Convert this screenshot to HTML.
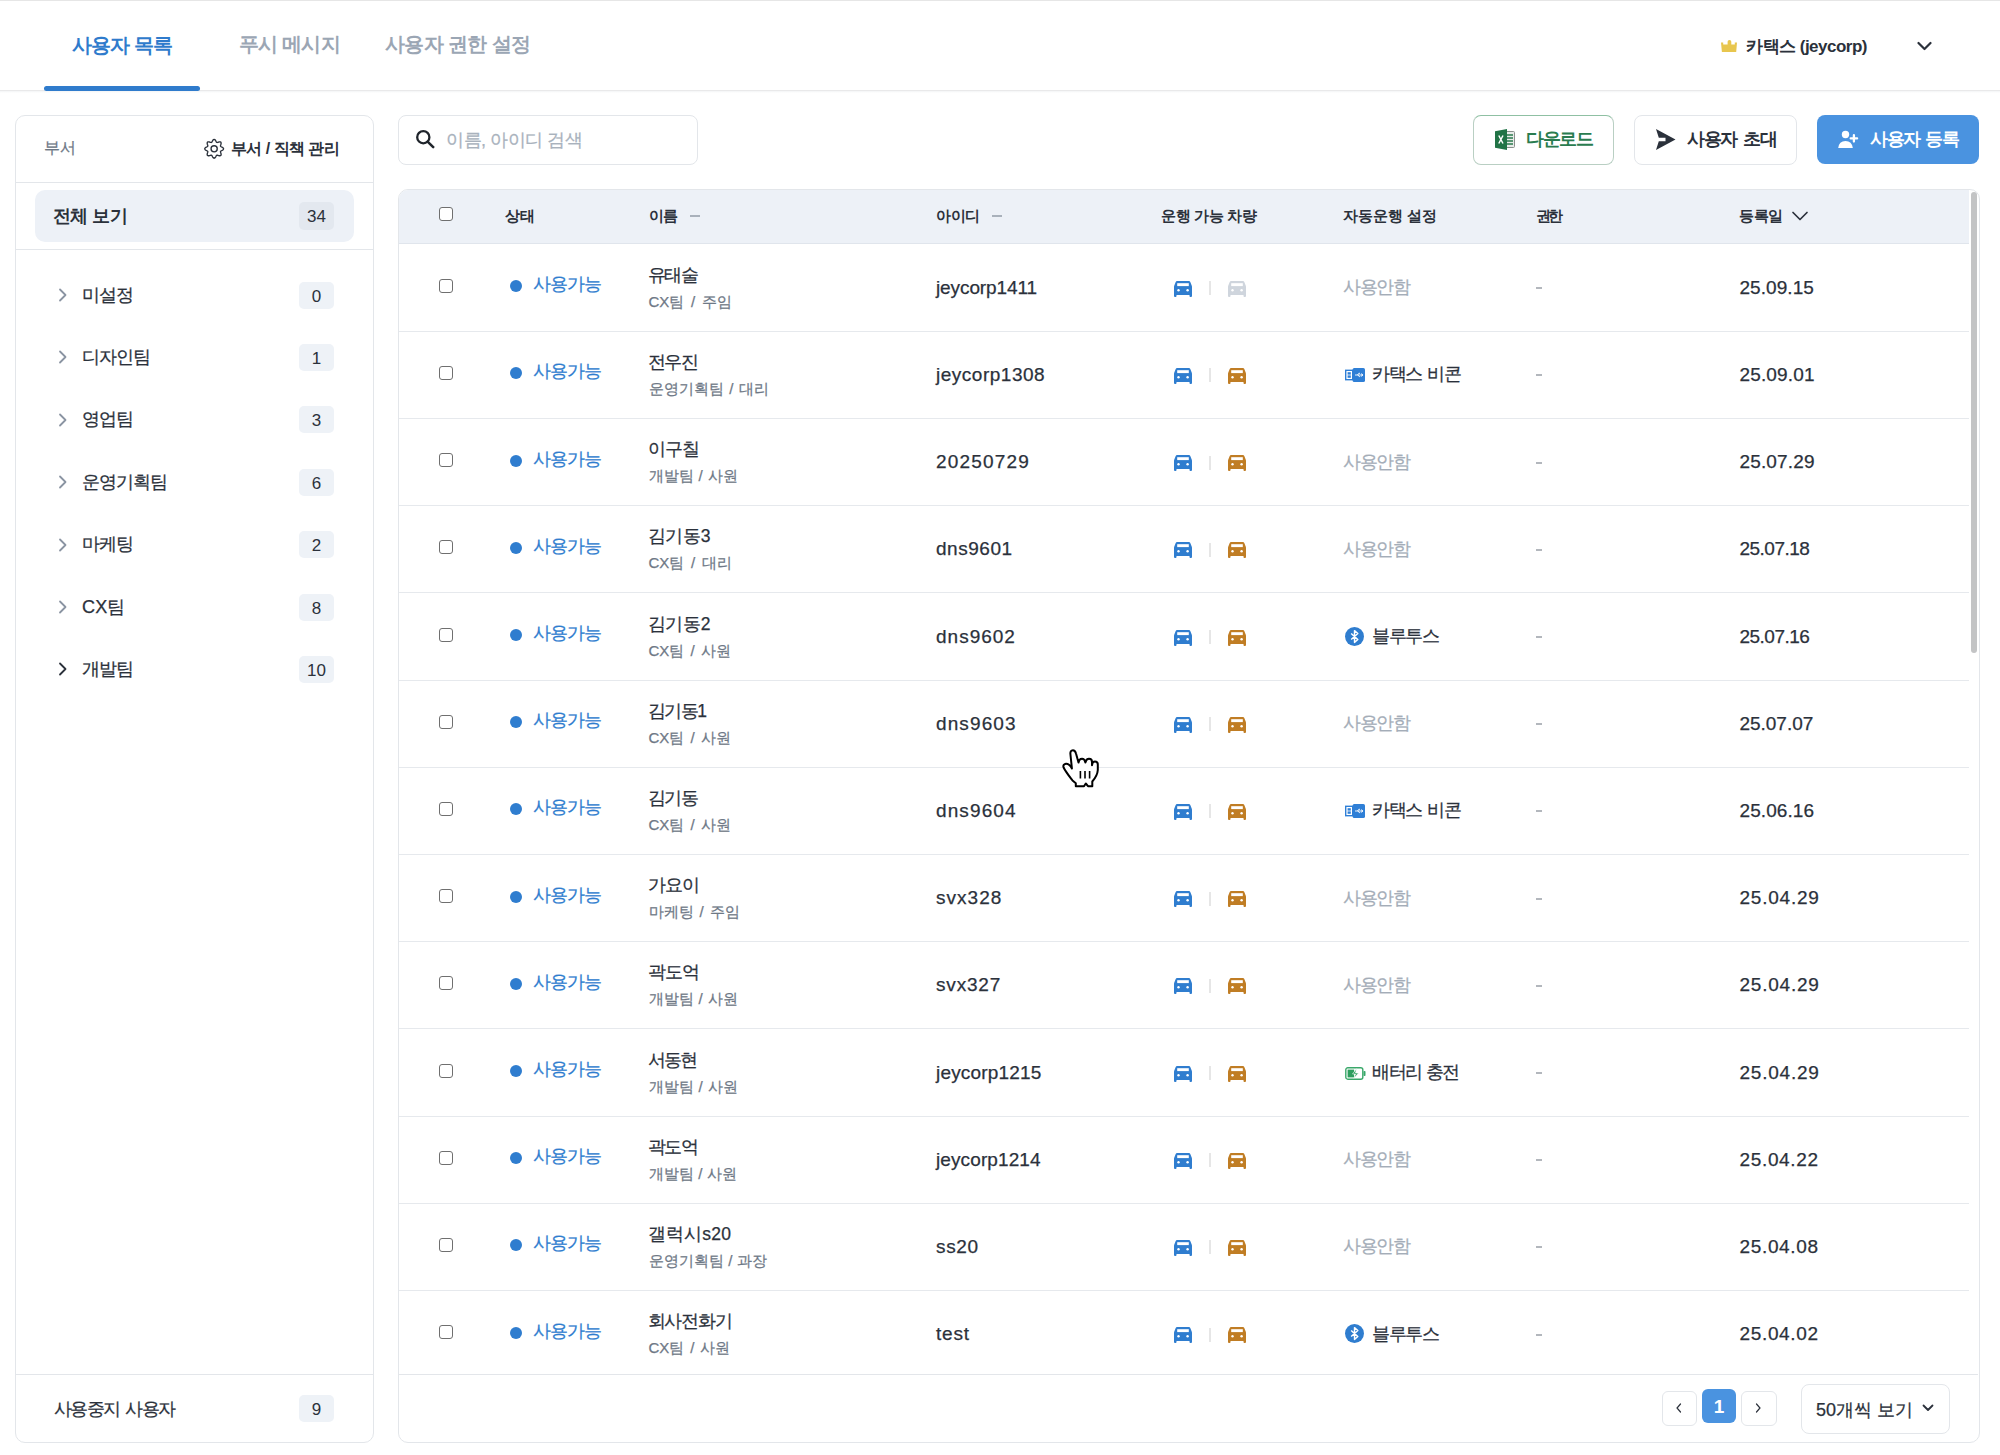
<!DOCTYPE html>
<html><head><meta charset="utf-8"><style>
html,body{margin:0;padding:0;background:#fff;}
body{width:2000px;height:1455px;overflow:hidden;position:relative;font-family:"Liberation Sans", sans-serif;}
.ab{position:absolute;}
.t{white-space:nowrap;line-height:1;}
.r{-webkit-text-stroke:0.25px currentColor;}
.cb{position:absolute;width:12px;height:12px;border:1.3px solid #6f6f6f;border-radius:3px;background:#fff;}
.badge{position:absolute;width:35px;height:27px;border-radius:5px;background:#eef2f7;font-size:17px;color:#2b313b;text-align:center;line-height:29px;}
</style></head><body>

<div class="ab" style="left:0;top:0;width:2000px;height:1px;background:#e6e6e6"></div>
<div class="ab" style="left:0;top:90px;width:2000px;height:2px;background:#e9e9ea"></div>
<div class="ab" style="left:0;top:91px;width:2000px;height:2px;background:linear-gradient(#f3f4f6,#fff)"></div>
<div class="ab t" style="left:72px;top:35px;font-size:20px;color:#2f7bcc;font-weight:700;letter-spacing:-1.0px;">사용자 목록</div>
<div class="ab t" style="left:239px;top:34px;font-size:20px;color:#9ba6b4;font-weight:700;letter-spacing:-0.8px;">푸시 메시지</div>
<div class="ab t" style="left:385px;top:34px;font-size:20px;color:#9ba6b4;font-weight:700;letter-spacing:-0.62px;">사용자 권한 설정</div>
<div class="ab" style="left:44px;top:86px;width:156px;height:5px;border-radius:3px;background:#2f7bcc"></div>
<svg class="ab" style="left:1720.7px;top:39.5px" width="16" height="12" viewBox="0 0 16 12"><path fill="#e8c64e" d="M0 2.6H2.2V4.4H6.6V1.7Q6.6 0 8.45 0Q10.3 0 10.3 1.7V4.4H13.8V2.6H16L15.2 12H0.9Z"/></svg>
<div class="ab t" style="left:1746px;top:38px;font-size:17px;color:#2b313b;font-weight:700;letter-spacing:-0.5px;">카택스 (jeycorp)</div>
<svg class="ab" style="left:1917px;top:41px" width="15" height="10" viewBox="0 0 15 10"><path d="M1.5 2L7.5 8L13.5 2" fill="none" stroke="#2b313b" stroke-width="2.2" stroke-linecap="round" stroke-linejoin="round"/></svg>
<div class="ab" style="left:15px;top:115px;width:357px;height:1326px;border:1px solid #e3e6ea;border-radius:10px;"></div>
<div class="ab t r" style="left:44px;top:140px;font-size:16px;color:#6e7886;font-weight:400;letter-spacing:0px;">부서</div>
<svg class="ab" style="left:202px;top:137px" width="24" height="24" viewBox="0 0 24 24"><path fill="none" stroke="#2b313b" stroke-width="1.35" stroke-linejoin="round" d="M21.55 11.80 L21.36 11.20 L20.85 10.65 L20.14 10.21 L19.42 9.85 L18.84 9.53 L18.52 9.16 L18.49 8.67 L18.67 8.04 L18.93 7.27 L19.11 6.46 L19.09 5.71 L18.80 5.15 L18.24 4.86 L17.49 4.84 L16.68 5.02 L15.91 5.28 L15.28 5.46 L14.79 5.43 L14.42 5.11 L14.10 4.53 L13.74 3.81 L13.30 3.10 L12.75 2.59 L12.15 2.40 L11.55 2.59 L11.00 3.10 L10.56 3.81 L10.20 4.53 L9.88 5.11 L9.51 5.43 L9.02 5.46 L8.39 5.28 L7.62 5.02 L6.81 4.84 L6.06 4.86 L5.50 5.15 L5.21 5.71 L5.19 6.46 L5.37 7.27 L5.63 8.04 L5.81 8.67 L5.78 9.16 L5.46 9.53 L4.88 9.85 L4.16 10.21 L3.45 10.65 L2.94 11.20 L2.75 11.80 L2.94 12.40 L3.45 12.95 L4.16 13.39 L4.88 13.75 L5.46 14.07 L5.78 14.44 L5.81 14.93 L5.63 15.56 L5.37 16.33 L5.19 17.14 L5.21 17.89 L5.50 18.45 L6.06 18.74 L6.81 18.76 L7.62 18.58 L8.39 18.32 L9.02 18.14 L9.51 18.17 L9.88 18.49 L10.20 19.07 L10.56 19.79 L11.00 20.50 L11.55 21.01 L12.15 21.20 L12.75 21.01 L13.30 20.50 L13.74 19.79 L14.10 19.07 L14.42 18.49 L14.79 18.17 L15.28 18.14 L15.91 18.32 L16.68 18.58 L17.49 18.76 L18.24 18.74 L18.80 18.45 L19.09 17.89 L19.11 17.14 L18.93 16.33 L18.67 15.56 L18.49 14.93 L18.52 14.44 L18.84 14.07 L19.42 13.75 L20.14 13.39 L20.85 12.95 L21.36 12.40 L21.55 11.80Z"/><circle cx="12.15" cy="11.8" r="3.1" fill="none" stroke="#2b313b" stroke-width="1.35"/></svg>
<div class="ab t" style="left:231px;top:140.5px;font-size:16px;color:#2b313b;font-weight:700;letter-spacing:-0.55px;">부서 / 직책 관리</div>
<div class="ab" style="left:16px;top:182px;width:357px;height:1px;background:#e3e6ea"></div>
<div class="ab" style="left:35px;top:190px;width:319px;height:52px;border-radius:10px;background:#edf1f7"></div>
<div class="ab t" style="left:53px;top:206.5px;font-size:18px;color:#2b313b;font-weight:700;letter-spacing:-0.6px;">전체 보기</div>
<div class="badge" style="left:299px;top:202px;height:28px;line-height:30px;background:#e3e8ef">34</div>
<div class="ab" style="left:16px;top:249px;width:357px;height:1px;background:#e3e6ea"></div>
<svg class="ab" style="left:58px;top:288.0px" width="10" height="14" viewBox="0 0 10 14"><path d="M2 1.5L7.5 7L2 12.5" fill="none" stroke="#8a94a2" stroke-width="1.8" stroke-linecap="round" stroke-linejoin="round"/></svg>
<div class="ab t r" style="left:82px;top:285.5px;font-size:18px;color:#2b313b;font-weight:400;letter-spacing:-1.0px;">미설정</div>
<div class="badge" style="left:299px;top:281.5px">0</div>
<svg class="ab" style="left:58px;top:350.4px" width="10" height="14" viewBox="0 0 10 14"><path d="M2 1.5L7.5 7L2 12.5" fill="none" stroke="#8a94a2" stroke-width="1.8" stroke-linecap="round" stroke-linejoin="round"/></svg>
<div class="ab t r" style="left:82px;top:347.9px;font-size:18px;color:#2b313b;font-weight:400;letter-spacing:-1.0px;">디자인팀</div>
<div class="badge" style="left:299px;top:343.9px">1</div>
<svg class="ab" style="left:58px;top:412.8px" width="10" height="14" viewBox="0 0 10 14"><path d="M2 1.5L7.5 7L2 12.5" fill="none" stroke="#8a94a2" stroke-width="1.8" stroke-linecap="round" stroke-linejoin="round"/></svg>
<div class="ab t r" style="left:82px;top:410.3px;font-size:18px;color:#2b313b;font-weight:400;letter-spacing:-1.0px;">영업팀</div>
<div class="badge" style="left:299px;top:406.3px">3</div>
<svg class="ab" style="left:58px;top:475.2px" width="10" height="14" viewBox="0 0 10 14"><path d="M2 1.5L7.5 7L2 12.5" fill="none" stroke="#8a94a2" stroke-width="1.8" stroke-linecap="round" stroke-linejoin="round"/></svg>
<div class="ab t r" style="left:82px;top:472.7px;font-size:18px;color:#2b313b;font-weight:400;letter-spacing:-1.0px;">운영기획팀</div>
<div class="badge" style="left:299px;top:468.7px">6</div>
<svg class="ab" style="left:58px;top:537.6px" width="10" height="14" viewBox="0 0 10 14"><path d="M2 1.5L7.5 7L2 12.5" fill="none" stroke="#8a94a2" stroke-width="1.8" stroke-linecap="round" stroke-linejoin="round"/></svg>
<div class="ab t r" style="left:82px;top:535.1px;font-size:18px;color:#2b313b;font-weight:400;letter-spacing:-1.0px;">마케팅</div>
<div class="badge" style="left:299px;top:531.1px">2</div>
<svg class="ab" style="left:58px;top:600.0px" width="10" height="14" viewBox="0 0 10 14"><path d="M2 1.5L7.5 7L2 12.5" fill="none" stroke="#8a94a2" stroke-width="1.8" stroke-linecap="round" stroke-linejoin="round"/></svg>
<div class="ab t r" style="left:82px;top:597.5px;font-size:18px;color:#2b313b;font-weight:400;letter-spacing:0.2px;">CX팀</div>
<div class="badge" style="left:299px;top:593.5px">8</div>
<svg class="ab" style="left:58px;top:662.4px" width="10" height="14" viewBox="0 0 10 14"><path d="M2 1.5L7.5 7L2 12.5" fill="none" stroke="#2b313b" stroke-width="1.8" stroke-linecap="round" stroke-linejoin="round"/></svg>
<div class="ab t r" style="left:82px;top:659.9px;font-size:18px;color:#2b313b;font-weight:400;letter-spacing:-1.0px;">개발팀</div>
<div class="badge" style="left:299px;top:655.9px">10</div>
<div class="ab" style="left:16px;top:1374px;width:357px;height:1px;background:#e3e6ea"></div>
<div class="ab t r" style="left:53.5px;top:1400px;font-size:18px;color:#2b313b;font-weight:400;letter-spacing:-1.5px;word-spacing:2.3px;">사용중지 사용자</div>
<div class="badge" style="left:299px;top:1395px;height:27px">9</div>
<div class="ab" style="left:398px;top:115px;width:298px;height:48px;border:1px solid #e3e6ea;border-radius:8px;"></div>
<svg class="ab" style="left:415px;top:129px" width="20" height="20" viewBox="0 0 20 20"><circle cx="8.3" cy="8.2" r="6.1" fill="none" stroke="#1f242b" stroke-width="2.3"/><path d="M12.6 12.6L18.2 18.2" stroke="#1f242b" stroke-width="2.5" stroke-linecap="round"/></svg>
<div class="ab t r" style="left:446px;top:130.5px;font-size:18px;color:#a9b2bd;font-weight:400;letter-spacing:-0.47px;">이름, 아이디 검색</div>
<div class="ab" style="left:1473px;top:115px;width:139px;height:48px;border:1px solid #b9cfc3;border-top-color:#8fc0a3;border-radius:8px;"></div>
<svg class="ab" style="left:1495px;top:129px" width="20" height="21" viewBox="0 0 20 21"><rect x="11" y="2.5" width="8.5" height="16" rx="1" fill="#e8ece9" stroke="#8a8f8c" stroke-width="1"/><path d="M12 6h6M12 9h6M12 12h6M12 15h6" stroke="#2a7a4d" stroke-width="1.4"/><path fill="#217346" d="M0 2.2L12 0V21L0 18.8Z"/><path d="M3.8 6.5L8 14.5M8 6.5L3.8 14.5" stroke="#fff" stroke-width="1.5"/></svg>
<div class="ab t" style="left:1526px;top:129.5px;font-size:18px;color:#2a7c4f;font-weight:700;letter-spacing:-1.4px;">다운로드</div>
<div class="ab" style="left:1634px;top:115px;width:161px;height:48px;border:1px solid #e3e6ea;border-radius:8px;"></div>
<svg class="ab" style="left:1656px;top:129px" width="20" height="21" viewBox="0 0 20 21"><path fill="#2b313b" d="M0 0L19.5 10.5L0 21L2.8 12.2H9.5V8.8H2.8Z"/></svg>
<div class="ab t" style="left:1687px;top:129.5px;font-size:18px;color:#2b313b;font-weight:700;letter-spacing:-1.3px;word-spacing:2px;">사용자 초대</div>
<div class="ab" style="left:1817px;top:115px;width:162px;height:49px;border-radius:8px;background:#4a93e0"></div>
<svg class="ab" style="left:1837px;top:129px" width="24" height="20" viewBox="0 0 24 20"><circle cx="8.5" cy="5.5" r="3.7" fill="#fff"/><path fill="#fff" d="M1.2 19Q2 12 8.5 12Q15 12 15.8 19Z"/><path d="M16.9 6.2V12.6M13.7 9.4H20.1" stroke="#fff" stroke-width="2.3" stroke-linecap="round"/></svg>
<div class="ab t" style="left:1870px;top:129.5px;font-size:18px;color:#ffffff;font-weight:700;letter-spacing:-1.4px;word-spacing:2px;">사용자 등록</div>
<div class="ab" style="left:398px;top:189px;width:1580px;height:1252px;border:1px solid #e3e6ea;border-radius:10px;overflow:hidden">
<div class="ab" style="left:0;top:0;width:1570px;height:53px;background:#edf1f7;border-bottom:1px solid #e0e5ec"></div>
</div>
<div class="cb" style="left:439px;top:207px"></div>
<div class="ab t" style="left:505px;top:208.3px;font-size:15px;color:#2b313b;font-weight:700;letter-spacing:-0.5px;">상태</div>
<div class="ab t" style="left:648.5px;top:208.3px;font-size:15px;color:#2b313b;font-weight:700;letter-spacing:-0.5px;">이름</div>
<div class="ab" style="left:690px;top:215px;width:10px;height:2px;background:#a9b1bb"></div>
<div class="ab t" style="left:936px;top:208.3px;font-size:15px;color:#2b313b;font-weight:700;letter-spacing:-0.5px;">아이디</div>
<div class="ab" style="left:992px;top:215px;width:10px;height:2px;background:#a9b1bb"></div>
<div class="ab t" style="left:1161px;top:208.3px;font-size:15px;color:#2b313b;font-weight:700;letter-spacing:-0.4px;">운행 가능 차량</div>
<div class="ab t" style="left:1343px;top:208.3px;font-size:15px;color:#2b313b;font-weight:700;letter-spacing:-0.1px;">자동운행 설정</div>
<div class="ab t" style="left:1535.5px;top:208.3px;font-size:15px;color:#2b313b;font-weight:700;letter-spacing:-2.8px;">권한</div>
<div class="ab t" style="left:1739px;top:208.3px;font-size:15px;color:#2b313b;font-weight:700;letter-spacing:-0.5px;">등록일</div>
<svg class="ab" style="left:1791px;top:210px" width="18" height="12" viewBox="0 0 18 12"><path d="M2 2.5L9 9.5L16 2.5" fill="none" stroke="#2b313b" stroke-width="1.7" stroke-linecap="round" stroke-linejoin="round"/></svg>
<div class="ab" style="left:399px;top:331px;width:1570px;height:1px;background:#e6e9ed"></div>
<div class="cb" style="left:439px;top:278.7px"></div>
<div class="ab" style="left:510px;top:280.2px;width:12px;height:12px;border-radius:50%;background:#2f7dcf"></div>
<div class="ab t r" style="left:533px;top:275.2px;font-size:18px;color:#2f7dcf;font-weight:400;letter-spacing:-1.1px;">사용가능</div>
<div class="ab t r" style="left:647.5px;top:266.7px;font-size:17.5px;color:#2b313b;font-weight:400;letter-spacing:-1.5px;">유태술</div>
<div class="ab t r" style="left:648.5px;top:293.8px;font-size:15px;color:#6e7886;font-weight:400;letter-spacing:0px;word-spacing:2.6px;">CX팀 / 주임</div>
<div class="ab t r" style="left:936px;top:277.7px;font-size:19px;color:#2b313b;font-weight:400;letter-spacing:-0.1px;">jeycorp1411</div>
<svg class="ab" style="left:1173.5px;top:280.7px" width="18" height="16" viewBox="0 0 18 16"><path fill="#2f7dcf" d="M1.7 0.9Q2.1 0 3.1 0H14.9Q15.9 0 16.3 0.9L17.7 4.6Q18 5.3 18 6V15Q18 16 17 16H16.4Q15.5 16 15.5 15V13.9H2.5V15Q2.5 16 1.6 16H1Q0 16 0 15V6Q0 5.3 0.3 4.6Z"/><rect x="3.2" y="2.2" width="11.6" height="2.9" fill="#fff"/><circle cx="4.5" cy="9.3" r="1.2" fill="#fff"/><circle cx="13.6" cy="9.3" r="1.2" fill="#fff"/></svg>
<div class="ab" style="left:1209px;top:281.2px;width:2px;height:14px;background:#e6e6e6"></div>
<svg class="ab" style="left:1228px;top:280.7px" width="18" height="16" viewBox="0 0 18 16"><path fill="#cfd5dd" d="M1.7 0.9Q2.1 0 3.1 0H14.9Q15.9 0 16.3 0.9L17.7 4.6Q18 5.3 18 6V15Q18 16 17 16H16.4Q15.5 16 15.5 15V13.9H2.5V15Q2.5 16 1.6 16H1Q0 16 0 15V6Q0 5.3 0.3 4.6Z"/><rect x="3.2" y="2.2" width="11.6" height="2.9" fill="#fff"/><circle cx="4.5" cy="9.3" r="1.2" fill="#fff"/><circle cx="13.6" cy="9.3" r="1.2" fill="#fff"/></svg>
<div class="ab t r" style="left:1343px;top:278.2px;font-size:18px;color:#a4adb8;font-weight:400;letter-spacing:-1.465px;">사용안함</div>
<div class="ab" style="left:1536px;top:287px;width:6px;height:2px;background:#b3b7bd"></div>
<div class="ab t r" style="left:1739.5px;top:277.7px;font-size:19px;color:#2b313b;font-weight:400;letter-spacing:0.058px;">25.09.15</div>
<div class="ab" style="left:399px;top:418px;width:1570px;height:1px;background:#e6e9ed"></div>
<div class="cb" style="left:439px;top:365.9px"></div>
<div class="ab" style="left:510px;top:367.4px;width:12px;height:12px;border-radius:50%;background:#2f7dcf"></div>
<div class="ab t r" style="left:533px;top:362.40000000000003px;font-size:18px;color:#2f7dcf;font-weight:400;letter-spacing:-1.1px;">사용가능</div>
<div class="ab t r" style="left:647.5px;top:353.90000000000003px;font-size:17.5px;color:#2b313b;font-weight:400;letter-spacing:-1.5px;">전우진</div>
<div class="ab t r" style="left:648.5px;top:381.00000000000006px;font-size:15px;color:#6e7886;font-weight:400;letter-spacing:0px;word-spacing:1.5px;">운영기획팀 / 대리</div>
<div class="ab t r" style="left:936px;top:364.90000000000003px;font-size:19px;color:#2b313b;font-weight:400;letter-spacing:0.51px;">jeycorp1308</div>
<svg class="ab" style="left:1173.5px;top:367.90000000000003px" width="18" height="16" viewBox="0 0 18 16"><path fill="#2f7dcf" d="M1.7 0.9Q2.1 0 3.1 0H14.9Q15.9 0 16.3 0.9L17.7 4.6Q18 5.3 18 6V15Q18 16 17 16H16.4Q15.5 16 15.5 15V13.9H2.5V15Q2.5 16 1.6 16H1Q0 16 0 15V6Q0 5.3 0.3 4.6Z"/><rect x="3.2" y="2.2" width="11.6" height="2.9" fill="#fff"/><circle cx="4.5" cy="9.3" r="1.2" fill="#fff"/><circle cx="13.6" cy="9.3" r="1.2" fill="#fff"/></svg>
<div class="ab" style="left:1209px;top:368.4px;width:2px;height:14px;background:#e6e6e6"></div>
<svg class="ab" style="left:1228px;top:367.90000000000003px" width="18" height="16" viewBox="0 0 18 16"><path fill="#c07d24" d="M1.7 0.9Q2.1 0 3.1 0H14.9Q15.9 0 16.3 0.9L17.7 4.6Q18 5.3 18 6V15Q18 16 17 16H16.4Q15.5 16 15.5 15V13.9H2.5V15Q2.5 16 1.6 16H1Q0 16 0 15V6Q0 5.3 0.3 4.6Z"/><rect x="3.2" y="2.2" width="11.6" height="2.9" fill="#fff"/><circle cx="4.5" cy="9.3" r="1.2" fill="#fff"/><circle cx="13.6" cy="9.3" r="1.2" fill="#fff"/></svg>
<svg class="ab" style="left:1345px;top:368.2px" width="20" height="14" viewBox="0 0 20 14"><rect x="0" y="1.6" width="9" height="10.8" fill="#2f7fd6"/><rect x="1.4" y="3" width="5.6" height="8" fill="#fff"/><rect x="2.6" y="4.2" width="3.2" height="2.4" fill="#2f7fd6"/><rect x="2.6" y="7.4" width="3.2" height="2.4" fill="#2f7fd6"/><rect x="7.6" y="0" width="12.4" height="14" rx="1.6" fill="#2f7fd6"/><path d="M10 7H18M16 5.6L18 7L16 8.4M12.5 7L13.8 5.3H15M13 7L14.2 8.6H15.2" stroke="#fff" stroke-width="0.9" fill="none"/></svg>
<div class="ab t r" style="left:1372px;top:365.40000000000003px;font-size:18px;color:#2b313b;font-weight:400;letter-spacing:-1.3px;word-spacing:1.3px;">카택스 비콘</div>
<div class="ab" style="left:1536px;top:374px;width:6px;height:2px;background:#b3b7bd"></div>
<div class="ab t r" style="left:1739.5px;top:364.90000000000003px;font-size:19px;color:#2b313b;font-weight:400;letter-spacing:0.143px;">25.09.01</div>
<div class="ab" style="left:399px;top:505px;width:1570px;height:1px;background:#e6e9ed"></div>
<div class="cb" style="left:439px;top:453.1px"></div>
<div class="ab" style="left:510px;top:454.6px;width:12px;height:12px;border-radius:50%;background:#2f7dcf"></div>
<div class="ab t r" style="left:533px;top:449.6px;font-size:18px;color:#2f7dcf;font-weight:400;letter-spacing:-1.1px;">사용가능</div>
<div class="ab t r" style="left:647.5px;top:441.1px;font-size:17.5px;color:#2b313b;font-weight:400;letter-spacing:-1.0px;">이구칠</div>
<div class="ab t r" style="left:648.5px;top:468.20000000000005px;font-size:15px;color:#6e7886;font-weight:400;letter-spacing:0px;word-spacing:0.8px;">개발팀 / 사원</div>
<div class="ab t r" style="left:936px;top:452.1px;font-size:19px;color:#2b313b;font-weight:400;letter-spacing:1.175px;">20250729</div>
<svg class="ab" style="left:1173.5px;top:455.1px" width="18" height="16" viewBox="0 0 18 16"><path fill="#2f7dcf" d="M1.7 0.9Q2.1 0 3.1 0H14.9Q15.9 0 16.3 0.9L17.7 4.6Q18 5.3 18 6V15Q18 16 17 16H16.4Q15.5 16 15.5 15V13.9H2.5V15Q2.5 16 1.6 16H1Q0 16 0 15V6Q0 5.3 0.3 4.6Z"/><rect x="3.2" y="2.2" width="11.6" height="2.9" fill="#fff"/><circle cx="4.5" cy="9.3" r="1.2" fill="#fff"/><circle cx="13.6" cy="9.3" r="1.2" fill="#fff"/></svg>
<div class="ab" style="left:1209px;top:455.6px;width:2px;height:14px;background:#e6e6e6"></div>
<svg class="ab" style="left:1228px;top:455.1px" width="18" height="16" viewBox="0 0 18 16"><path fill="#c07d24" d="M1.7 0.9Q2.1 0 3.1 0H14.9Q15.9 0 16.3 0.9L17.7 4.6Q18 5.3 18 6V15Q18 16 17 16H16.4Q15.5 16 15.5 15V13.9H2.5V15Q2.5 16 1.6 16H1Q0 16 0 15V6Q0 5.3 0.3 4.6Z"/><rect x="3.2" y="2.2" width="11.6" height="2.9" fill="#fff"/><circle cx="4.5" cy="9.3" r="1.2" fill="#fff"/><circle cx="13.6" cy="9.3" r="1.2" fill="#fff"/></svg>
<div class="ab t r" style="left:1343px;top:452.6px;font-size:18px;color:#a4adb8;font-weight:400;letter-spacing:-1.465px;">사용안함</div>
<div class="ab" style="left:1536px;top:462px;width:6px;height:2px;background:#b3b7bd"></div>
<div class="ab t r" style="left:1739.5px;top:452.1px;font-size:19px;color:#2b313b;font-weight:400;letter-spacing:0.143px;">25.07.29</div>
<div class="ab" style="left:399px;top:592px;width:1570px;height:1px;background:#e6e9ed"></div>
<div class="cb" style="left:439px;top:540.3px"></div>
<div class="ab" style="left:510px;top:541.8px;width:12px;height:12px;border-radius:50%;background:#2f7dcf"></div>
<div class="ab t r" style="left:533px;top:536.8000000000001px;font-size:18px;color:#2f7dcf;font-weight:400;letter-spacing:-1.1px;">사용가능</div>
<div class="ab t r" style="left:647.5px;top:528.3000000000001px;font-size:17.5px;color:#2b313b;font-weight:400;letter-spacing:-0.265px;">김기동3</div>
<div class="ab t r" style="left:648.5px;top:555.4000000000001px;font-size:15px;color:#6e7886;font-weight:400;letter-spacing:0px;word-spacing:2.6px;">CX팀 / 대리</div>
<div class="ab t r" style="left:936px;top:539.3000000000001px;font-size:19px;color:#2b313b;font-weight:400;letter-spacing:0.532px;">dns9601</div>
<svg class="ab" style="left:1173.5px;top:542.3000000000001px" width="18" height="16" viewBox="0 0 18 16"><path fill="#2f7dcf" d="M1.7 0.9Q2.1 0 3.1 0H14.9Q15.9 0 16.3 0.9L17.7 4.6Q18 5.3 18 6V15Q18 16 17 16H16.4Q15.5 16 15.5 15V13.9H2.5V15Q2.5 16 1.6 16H1Q0 16 0 15V6Q0 5.3 0.3 4.6Z"/><rect x="3.2" y="2.2" width="11.6" height="2.9" fill="#fff"/><circle cx="4.5" cy="9.3" r="1.2" fill="#fff"/><circle cx="13.6" cy="9.3" r="1.2" fill="#fff"/></svg>
<div class="ab" style="left:1209px;top:542.8px;width:2px;height:14px;background:#e6e6e6"></div>
<svg class="ab" style="left:1228px;top:542.3000000000001px" width="18" height="16" viewBox="0 0 18 16"><path fill="#c07d24" d="M1.7 0.9Q2.1 0 3.1 0H14.9Q15.9 0 16.3 0.9L17.7 4.6Q18 5.3 18 6V15Q18 16 17 16H16.4Q15.5 16 15.5 15V13.9H2.5V15Q2.5 16 1.6 16H1Q0 16 0 15V6Q0 5.3 0.3 4.6Z"/><rect x="3.2" y="2.2" width="11.6" height="2.9" fill="#fff"/><circle cx="4.5" cy="9.3" r="1.2" fill="#fff"/><circle cx="13.6" cy="9.3" r="1.2" fill="#fff"/></svg>
<div class="ab t r" style="left:1343px;top:539.8000000000001px;font-size:18px;color:#a4adb8;font-weight:400;letter-spacing:-1.465px;">사용안함</div>
<div class="ab" style="left:1536px;top:549px;width:6px;height:2px;background:#b3b7bd"></div>
<div class="ab t r" style="left:1739.5px;top:539.3000000000001px;font-size:19px;color:#2b313b;font-weight:400;letter-spacing:-0.517px;">25.07.18</div>
<div class="ab" style="left:399px;top:680px;width:1570px;height:1px;background:#e6e9ed"></div>
<div class="cb" style="left:439px;top:627.5px"></div>
<div class="ab" style="left:510px;top:629.0px;width:12px;height:12px;border-radius:50%;background:#2f7dcf"></div>
<div class="ab t r" style="left:533px;top:624.0px;font-size:18px;color:#2f7dcf;font-weight:400;letter-spacing:-1.1px;">사용가능</div>
<div class="ab t r" style="left:647.5px;top:615.5px;font-size:17.5px;color:#2b313b;font-weight:400;letter-spacing:-0.265px;">김기동2</div>
<div class="ab t r" style="left:648.5px;top:642.6px;font-size:15px;color:#6e7886;font-weight:400;letter-spacing:0px;word-spacing:2.1px;">CX팀 / 사원</div>
<div class="ab t r" style="left:936px;top:626.5px;font-size:19px;color:#2b313b;font-weight:400;letter-spacing:1.0px;">dns9602</div>
<svg class="ab" style="left:1173.5px;top:629.5px" width="18" height="16" viewBox="0 0 18 16"><path fill="#2f7dcf" d="M1.7 0.9Q2.1 0 3.1 0H14.9Q15.9 0 16.3 0.9L17.7 4.6Q18 5.3 18 6V15Q18 16 17 16H16.4Q15.5 16 15.5 15V13.9H2.5V15Q2.5 16 1.6 16H1Q0 16 0 15V6Q0 5.3 0.3 4.6Z"/><rect x="3.2" y="2.2" width="11.6" height="2.9" fill="#fff"/><circle cx="4.5" cy="9.3" r="1.2" fill="#fff"/><circle cx="13.6" cy="9.3" r="1.2" fill="#fff"/></svg>
<div class="ab" style="left:1209px;top:630.0px;width:2px;height:14px;background:#e6e6e6"></div>
<svg class="ab" style="left:1228px;top:629.5px" width="18" height="16" viewBox="0 0 18 16"><path fill="#c07d24" d="M1.7 0.9Q2.1 0 3.1 0H14.9Q15.9 0 16.3 0.9L17.7 4.6Q18 5.3 18 6V15Q18 16 17 16H16.4Q15.5 16 15.5 15V13.9H2.5V15Q2.5 16 1.6 16H1Q0 16 0 15V6Q0 5.3 0.3 4.6Z"/><rect x="3.2" y="2.2" width="11.6" height="2.9" fill="#fff"/><circle cx="4.5" cy="9.3" r="1.2" fill="#fff"/><circle cx="13.6" cy="9.3" r="1.2" fill="#fff"/></svg>
<svg class="ab" style="left:1345px;top:626.5px" width="19" height="19" viewBox="0 0 20 20"><circle cx="10" cy="10" r="10" fill="#2f7dcf"/><path d="M6.5 6.8L13.5 13.2L10 16.2V3.8L13.5 6.8L6.5 13.2" fill="none" stroke="#fff" stroke-width="1.5" stroke-linejoin="round"/></svg>
<div class="ab t r" style="left:1372px;top:627.0px;font-size:18px;color:#2b313b;font-weight:400;letter-spacing:-1.481px;word-spacing:0px;">블루투스</div>
<div class="ab" style="left:1536px;top:636px;width:6px;height:2px;background:#b3b7bd"></div>
<div class="ab t r" style="left:1739.5px;top:626.5px;font-size:19px;color:#2b313b;font-weight:400;letter-spacing:-0.517px;">25.07.16</div>
<div class="ab" style="left:399px;top:767px;width:1570px;height:1px;background:#e6e9ed"></div>
<div class="cb" style="left:439px;top:714.7px"></div>
<div class="ab" style="left:510px;top:716.2px;width:12px;height:12px;border-radius:50%;background:#2f7dcf"></div>
<div class="ab t r" style="left:533px;top:711.2px;font-size:18px;color:#2f7dcf;font-weight:400;letter-spacing:-1.1px;">사용가능</div>
<div class="ab t r" style="left:647.5px;top:702.7px;font-size:17.5px;color:#2b313b;font-weight:400;letter-spacing:-1.434px;">김기동1</div>
<div class="ab t r" style="left:648.5px;top:729.8000000000001px;font-size:15px;color:#6e7886;font-weight:400;letter-spacing:0px;word-spacing:2.1px;">CX팀 / 사원</div>
<div class="ab t r" style="left:936px;top:713.7px;font-size:19px;color:#2b313b;font-weight:400;letter-spacing:1.118px;">dns9603</div>
<svg class="ab" style="left:1173.5px;top:716.7px" width="18" height="16" viewBox="0 0 18 16"><path fill="#2f7dcf" d="M1.7 0.9Q2.1 0 3.1 0H14.9Q15.9 0 16.3 0.9L17.7 4.6Q18 5.3 18 6V15Q18 16 17 16H16.4Q15.5 16 15.5 15V13.9H2.5V15Q2.5 16 1.6 16H1Q0 16 0 15V6Q0 5.3 0.3 4.6Z"/><rect x="3.2" y="2.2" width="11.6" height="2.9" fill="#fff"/><circle cx="4.5" cy="9.3" r="1.2" fill="#fff"/><circle cx="13.6" cy="9.3" r="1.2" fill="#fff"/></svg>
<div class="ab" style="left:1209px;top:717.2px;width:2px;height:14px;background:#e6e6e6"></div>
<svg class="ab" style="left:1228px;top:716.7px" width="18" height="16" viewBox="0 0 18 16"><path fill="#c07d24" d="M1.7 0.9Q2.1 0 3.1 0H14.9Q15.9 0 16.3 0.9L17.7 4.6Q18 5.3 18 6V15Q18 16 17 16H16.4Q15.5 16 15.5 15V13.9H2.5V15Q2.5 16 1.6 16H1Q0 16 0 15V6Q0 5.3 0.3 4.6Z"/><rect x="3.2" y="2.2" width="11.6" height="2.9" fill="#fff"/><circle cx="4.5" cy="9.3" r="1.2" fill="#fff"/><circle cx="13.6" cy="9.3" r="1.2" fill="#fff"/></svg>
<div class="ab t r" style="left:1343px;top:714.2px;font-size:18px;color:#a4adb8;font-weight:400;letter-spacing:-1.465px;">사용안함</div>
<div class="ab" style="left:1536px;top:723px;width:6px;height:2px;background:#b3b7bd"></div>
<div class="ab t r" style="left:1739.5px;top:713.7px;font-size:19px;color:#2b313b;font-weight:400;letter-spacing:-0.027px;">25.07.07</div>
<div class="ab" style="left:399px;top:854px;width:1570px;height:1px;background:#e6e9ed"></div>
<div class="cb" style="left:439px;top:801.9px"></div>
<div class="ab" style="left:510px;top:803.4px;width:12px;height:12px;border-radius:50%;background:#2f7dcf"></div>
<div class="ab t r" style="left:533px;top:798.4000000000001px;font-size:18px;color:#2f7dcf;font-weight:400;letter-spacing:-1.1px;">사용가능</div>
<div class="ab t r" style="left:647.5px;top:789.9000000000001px;font-size:17.5px;color:#2b313b;font-weight:400;letter-spacing:-1.5px;">김기동</div>
<div class="ab t r" style="left:648.5px;top:817.0000000000001px;font-size:15px;color:#6e7886;font-weight:400;letter-spacing:0px;word-spacing:2.1px;">CX팀 / 사원</div>
<div class="ab t r" style="left:936px;top:800.9000000000001px;font-size:19px;color:#2b313b;font-weight:400;letter-spacing:1.118px;">dns9604</div>
<svg class="ab" style="left:1173.5px;top:803.9000000000001px" width="18" height="16" viewBox="0 0 18 16"><path fill="#2f7dcf" d="M1.7 0.9Q2.1 0 3.1 0H14.9Q15.9 0 16.3 0.9L17.7 4.6Q18 5.3 18 6V15Q18 16 17 16H16.4Q15.5 16 15.5 15V13.9H2.5V15Q2.5 16 1.6 16H1Q0 16 0 15V6Q0 5.3 0.3 4.6Z"/><rect x="3.2" y="2.2" width="11.6" height="2.9" fill="#fff"/><circle cx="4.5" cy="9.3" r="1.2" fill="#fff"/><circle cx="13.6" cy="9.3" r="1.2" fill="#fff"/></svg>
<div class="ab" style="left:1209px;top:804.4px;width:2px;height:14px;background:#e6e6e6"></div>
<svg class="ab" style="left:1228px;top:803.9000000000001px" width="18" height="16" viewBox="0 0 18 16"><path fill="#c07d24" d="M1.7 0.9Q2.1 0 3.1 0H14.9Q15.9 0 16.3 0.9L17.7 4.6Q18 5.3 18 6V15Q18 16 17 16H16.4Q15.5 16 15.5 15V13.9H2.5V15Q2.5 16 1.6 16H1Q0 16 0 15V6Q0 5.3 0.3 4.6Z"/><rect x="3.2" y="2.2" width="11.6" height="2.9" fill="#fff"/><circle cx="4.5" cy="9.3" r="1.2" fill="#fff"/><circle cx="13.6" cy="9.3" r="1.2" fill="#fff"/></svg>
<svg class="ab" style="left:1345px;top:804.2px" width="20" height="14" viewBox="0 0 20 14"><rect x="0" y="1.6" width="9" height="10.8" fill="#2f7fd6"/><rect x="1.4" y="3" width="5.6" height="8" fill="#fff"/><rect x="2.6" y="4.2" width="3.2" height="2.4" fill="#2f7fd6"/><rect x="2.6" y="7.4" width="3.2" height="2.4" fill="#2f7fd6"/><rect x="7.6" y="0" width="12.4" height="14" rx="1.6" fill="#2f7fd6"/><path d="M10 7H18M16 5.6L18 7L16 8.4M12.5 7L13.8 5.3H15M13 7L14.2 8.6H15.2" stroke="#fff" stroke-width="0.9" fill="none"/></svg>
<div class="ab t r" style="left:1372px;top:801.4000000000001px;font-size:18px;color:#2b313b;font-weight:400;letter-spacing:-1.3px;word-spacing:1.3px;">카택스 비콘</div>
<div class="ab" style="left:1536px;top:810px;width:6px;height:2px;background:#b3b7bd"></div>
<div class="ab t r" style="left:1739.5px;top:800.9000000000001px;font-size:19px;color:#2b313b;font-weight:400;letter-spacing:0.085px;">25.06.16</div>
<div class="ab" style="left:399px;top:941px;width:1570px;height:1px;background:#e6e9ed"></div>
<div class="cb" style="left:439px;top:889.1px"></div>
<div class="ab" style="left:510px;top:890.6px;width:12px;height:12px;border-radius:50%;background:#2f7dcf"></div>
<div class="ab t r" style="left:533px;top:885.6px;font-size:18px;color:#2f7dcf;font-weight:400;letter-spacing:-1.1px;">사용가능</div>
<div class="ab t r" style="left:647.5px;top:877.1px;font-size:17.5px;color:#2b313b;font-weight:400;letter-spacing:-1.0px;">가요이</div>
<div class="ab t r" style="left:648.5px;top:904.2px;font-size:15px;color:#6e7886;font-weight:400;letter-spacing:0px;word-spacing:1.8px;">마케팅 / 주임</div>
<div class="ab t r" style="left:936px;top:888.1px;font-size:19px;color:#2b313b;font-weight:400;letter-spacing:1.04px;">svx328</div>
<svg class="ab" style="left:1173.5px;top:891.1px" width="18" height="16" viewBox="0 0 18 16"><path fill="#2f7dcf" d="M1.7 0.9Q2.1 0 3.1 0H14.9Q15.9 0 16.3 0.9L17.7 4.6Q18 5.3 18 6V15Q18 16 17 16H16.4Q15.5 16 15.5 15V13.9H2.5V15Q2.5 16 1.6 16H1Q0 16 0 15V6Q0 5.3 0.3 4.6Z"/><rect x="3.2" y="2.2" width="11.6" height="2.9" fill="#fff"/><circle cx="4.5" cy="9.3" r="1.2" fill="#fff"/><circle cx="13.6" cy="9.3" r="1.2" fill="#fff"/></svg>
<div class="ab" style="left:1209px;top:891.6px;width:2px;height:14px;background:#e6e6e6"></div>
<svg class="ab" style="left:1228px;top:891.1px" width="18" height="16" viewBox="0 0 18 16"><path fill="#c07d24" d="M1.7 0.9Q2.1 0 3.1 0H14.9Q15.9 0 16.3 0.9L17.7 4.6Q18 5.3 18 6V15Q18 16 17 16H16.4Q15.5 16 15.5 15V13.9H2.5V15Q2.5 16 1.6 16H1Q0 16 0 15V6Q0 5.3 0.3 4.6Z"/><rect x="3.2" y="2.2" width="11.6" height="2.9" fill="#fff"/><circle cx="4.5" cy="9.3" r="1.2" fill="#fff"/><circle cx="13.6" cy="9.3" r="1.2" fill="#fff"/></svg>
<div class="ab t r" style="left:1343px;top:888.6px;font-size:18px;color:#a4adb8;font-weight:400;letter-spacing:-1.465px;">사용안함</div>
<div class="ab" style="left:1536px;top:898px;width:6px;height:2px;background:#b3b7bd"></div>
<div class="ab t r" style="left:1739.5px;top:888.1px;font-size:19px;color:#2b313b;font-weight:400;letter-spacing:0.772px;">25.04.29</div>
<div class="ab" style="left:399px;top:1028px;width:1570px;height:1px;background:#e6e9ed"></div>
<div class="cb" style="left:439px;top:976.3px"></div>
<div class="ab" style="left:510px;top:977.8px;width:12px;height:12px;border-radius:50%;background:#2f7dcf"></div>
<div class="ab t r" style="left:533px;top:972.8000000000001px;font-size:18px;color:#2f7dcf;font-weight:400;letter-spacing:-1.1px;">사용가능</div>
<div class="ab t r" style="left:647.5px;top:964.3000000000001px;font-size:17.5px;color:#2b313b;font-weight:400;letter-spacing:-1.0px;">곽도억</div>
<div class="ab t r" style="left:648.5px;top:991.4000000000001px;font-size:15px;color:#6e7886;font-weight:400;letter-spacing:0px;word-spacing:0.8px;">개발팀 / 사원</div>
<div class="ab t r" style="left:936px;top:975.3000000000001px;font-size:19px;color:#2b313b;font-weight:400;letter-spacing:0.82px;">svx327</div>
<svg class="ab" style="left:1173.5px;top:978.3000000000001px" width="18" height="16" viewBox="0 0 18 16"><path fill="#2f7dcf" d="M1.7 0.9Q2.1 0 3.1 0H14.9Q15.9 0 16.3 0.9L17.7 4.6Q18 5.3 18 6V15Q18 16 17 16H16.4Q15.5 16 15.5 15V13.9H2.5V15Q2.5 16 1.6 16H1Q0 16 0 15V6Q0 5.3 0.3 4.6Z"/><rect x="3.2" y="2.2" width="11.6" height="2.9" fill="#fff"/><circle cx="4.5" cy="9.3" r="1.2" fill="#fff"/><circle cx="13.6" cy="9.3" r="1.2" fill="#fff"/></svg>
<div class="ab" style="left:1209px;top:978.8px;width:2px;height:14px;background:#e6e6e6"></div>
<svg class="ab" style="left:1228px;top:978.3000000000001px" width="18" height="16" viewBox="0 0 18 16"><path fill="#c07d24" d="M1.7 0.9Q2.1 0 3.1 0H14.9Q15.9 0 16.3 0.9L17.7 4.6Q18 5.3 18 6V15Q18 16 17 16H16.4Q15.5 16 15.5 15V13.9H2.5V15Q2.5 16 1.6 16H1Q0 16 0 15V6Q0 5.3 0.3 4.6Z"/><rect x="3.2" y="2.2" width="11.6" height="2.9" fill="#fff"/><circle cx="4.5" cy="9.3" r="1.2" fill="#fff"/><circle cx="13.6" cy="9.3" r="1.2" fill="#fff"/></svg>
<div class="ab t r" style="left:1343px;top:975.8000000000001px;font-size:18px;color:#a4adb8;font-weight:400;letter-spacing:-1.465px;">사용안함</div>
<div class="ab" style="left:1536px;top:985px;width:6px;height:2px;background:#b3b7bd"></div>
<div class="ab t r" style="left:1739.5px;top:975.3000000000001px;font-size:19px;color:#2b313b;font-weight:400;letter-spacing:0.772px;">25.04.29</div>
<div class="ab" style="left:399px;top:1116px;width:1570px;height:1px;background:#e6e9ed"></div>
<div class="cb" style="left:439px;top:1063.5px"></div>
<div class="ab" style="left:510px;top:1065.0px;width:12px;height:12px;border-radius:50%;background:#2f7dcf"></div>
<div class="ab t r" style="left:533px;top:1060.0px;font-size:18px;color:#2f7dcf;font-weight:400;letter-spacing:-1.1px;">사용가능</div>
<div class="ab t r" style="left:647.5px;top:1051.5px;font-size:17.5px;color:#2b313b;font-weight:400;letter-spacing:-2.0px;">서동현</div>
<div class="ab t r" style="left:648.5px;top:1078.6px;font-size:15px;color:#6e7886;font-weight:400;letter-spacing:0px;word-spacing:0.8px;">개발팀 / 사원</div>
<div class="ab t r" style="left:936px;top:1062.5px;font-size:19px;color:#2b313b;font-weight:400;letter-spacing:0.17px;">jeycorp1215</div>
<svg class="ab" style="left:1173.5px;top:1065.5px" width="18" height="16" viewBox="0 0 18 16"><path fill="#2f7dcf" d="M1.7 0.9Q2.1 0 3.1 0H14.9Q15.9 0 16.3 0.9L17.7 4.6Q18 5.3 18 6V15Q18 16 17 16H16.4Q15.5 16 15.5 15V13.9H2.5V15Q2.5 16 1.6 16H1Q0 16 0 15V6Q0 5.3 0.3 4.6Z"/><rect x="3.2" y="2.2" width="11.6" height="2.9" fill="#fff"/><circle cx="4.5" cy="9.3" r="1.2" fill="#fff"/><circle cx="13.6" cy="9.3" r="1.2" fill="#fff"/></svg>
<div class="ab" style="left:1209px;top:1066.0px;width:2px;height:14px;background:#e6e6e6"></div>
<svg class="ab" style="left:1228px;top:1065.5px" width="18" height="16" viewBox="0 0 18 16"><path fill="#c07d24" d="M1.7 0.9Q2.1 0 3.1 0H14.9Q15.9 0 16.3 0.9L17.7 4.6Q18 5.3 18 6V15Q18 16 17 16H16.4Q15.5 16 15.5 15V13.9H2.5V15Q2.5 16 1.6 16H1Q0 16 0 15V6Q0 5.3 0.3 4.6Z"/><rect x="3.2" y="2.2" width="11.6" height="2.9" fill="#fff"/><circle cx="4.5" cy="9.3" r="1.2" fill="#fff"/><circle cx="13.6" cy="9.3" r="1.2" fill="#fff"/></svg>
<svg class="ab" style="left:1345px;top:1067.0px" width="21" height="13" viewBox="0 0 21 13"><rect x="0.8" y="0.8" width="17" height="11.4" rx="2" fill="#fff" stroke="#3aa86a" stroke-width="1.4"/><rect x="18.5" y="4" width="2" height="5" rx="0.8" fill="#3aa86a"/><rect x="2.6" y="2.6" width="6.5" height="7.8" fill="#2e9e5e"/><path d="M11.5 1.8L7.5 7H10.5L9 11.2L13.5 6H10.5Z" fill="#2e9e5e" stroke="#fff" stroke-width="0.6"/></svg>
<div class="ab t r" style="left:1372px;top:1063.0px;font-size:18px;color:#2b313b;font-weight:400;letter-spacing:-1.3px;word-spacing:-0.1px;">배터리 충전</div>
<div class="ab" style="left:1536px;top:1072px;width:6px;height:2px;background:#b3b7bd"></div>
<div class="ab t r" style="left:1739.5px;top:1062.5px;font-size:19px;color:#2b313b;font-weight:400;letter-spacing:0.772px;">25.04.29</div>
<div class="ab" style="left:399px;top:1203px;width:1570px;height:1px;background:#e6e9ed"></div>
<div class="cb" style="left:439px;top:1150.7px"></div>
<div class="ab" style="left:510px;top:1152.2px;width:12px;height:12px;border-radius:50%;background:#2f7dcf"></div>
<div class="ab t r" style="left:533px;top:1147.1999999999998px;font-size:18px;color:#2f7dcf;font-weight:400;letter-spacing:-1.1px;">사용가능</div>
<div class="ab t r" style="left:647.5px;top:1138.6999999999998px;font-size:17.5px;color:#2b313b;font-weight:400;letter-spacing:-1.15px;">곽도억</div>
<div class="ab t r" style="left:648.5px;top:1165.7999999999997px;font-size:15px;color:#6e7886;font-weight:400;letter-spacing:0px;word-spacing:0.5px;">개발팀 / 사원</div>
<div class="ab t r" style="left:936px;top:1149.6999999999998px;font-size:19px;color:#2b313b;font-weight:400;letter-spacing:0.11px;">jeycorp1214</div>
<svg class="ab" style="left:1173.5px;top:1152.6999999999998px" width="18" height="16" viewBox="0 0 18 16"><path fill="#2f7dcf" d="M1.7 0.9Q2.1 0 3.1 0H14.9Q15.9 0 16.3 0.9L17.7 4.6Q18 5.3 18 6V15Q18 16 17 16H16.4Q15.5 16 15.5 15V13.9H2.5V15Q2.5 16 1.6 16H1Q0 16 0 15V6Q0 5.3 0.3 4.6Z"/><rect x="3.2" y="2.2" width="11.6" height="2.9" fill="#fff"/><circle cx="4.5" cy="9.3" r="1.2" fill="#fff"/><circle cx="13.6" cy="9.3" r="1.2" fill="#fff"/></svg>
<div class="ab" style="left:1209px;top:1153.2px;width:2px;height:14px;background:#e6e6e6"></div>
<svg class="ab" style="left:1228px;top:1152.6999999999998px" width="18" height="16" viewBox="0 0 18 16"><path fill="#c07d24" d="M1.7 0.9Q2.1 0 3.1 0H14.9Q15.9 0 16.3 0.9L17.7 4.6Q18 5.3 18 6V15Q18 16 17 16H16.4Q15.5 16 15.5 15V13.9H2.5V15Q2.5 16 1.6 16H1Q0 16 0 15V6Q0 5.3 0.3 4.6Z"/><rect x="3.2" y="2.2" width="11.6" height="2.9" fill="#fff"/><circle cx="4.5" cy="9.3" r="1.2" fill="#fff"/><circle cx="13.6" cy="9.3" r="1.2" fill="#fff"/></svg>
<div class="ab t r" style="left:1343px;top:1150.1999999999998px;font-size:18px;color:#a4adb8;font-weight:400;letter-spacing:-1.465px;">사용안함</div>
<div class="ab" style="left:1536px;top:1159px;width:6px;height:2px;background:#b3b7bd"></div>
<div class="ab t r" style="left:1739.5px;top:1149.6999999999998px;font-size:19px;color:#2b313b;font-weight:400;letter-spacing:0.656px;">25.04.22</div>
<div class="ab" style="left:399px;top:1290px;width:1570px;height:1px;background:#e6e9ed"></div>
<div class="cb" style="left:439px;top:1237.9px"></div>
<div class="ab" style="left:510px;top:1239.4px;width:12px;height:12px;border-radius:50%;background:#2f7dcf"></div>
<div class="ab t r" style="left:533px;top:1234.3999999999999px;font-size:18px;color:#2f7dcf;font-weight:400;letter-spacing:-1.1px;">사용가능</div>
<div class="ab t r" style="left:647.5px;top:1225.8999999999999px;font-size:17.5px;color:#2b313b;font-weight:400;letter-spacing:0.26px;">갤럭시s20</div>
<div class="ab t r" style="left:648.5px;top:1252.9999999999998px;font-size:15px;color:#6e7886;font-weight:400;letter-spacing:0px;word-spacing:0.5px;">운영기획팀 / 과장</div>
<div class="ab t r" style="left:936px;top:1236.8999999999999px;font-size:19px;color:#2b313b;font-weight:400;letter-spacing:0.636px;">ss20</div>
<svg class="ab" style="left:1173.5px;top:1239.8999999999999px" width="18" height="16" viewBox="0 0 18 16"><path fill="#2f7dcf" d="M1.7 0.9Q2.1 0 3.1 0H14.9Q15.9 0 16.3 0.9L17.7 4.6Q18 5.3 18 6V15Q18 16 17 16H16.4Q15.5 16 15.5 15V13.9H2.5V15Q2.5 16 1.6 16H1Q0 16 0 15V6Q0 5.3 0.3 4.6Z"/><rect x="3.2" y="2.2" width="11.6" height="2.9" fill="#fff"/><circle cx="4.5" cy="9.3" r="1.2" fill="#fff"/><circle cx="13.6" cy="9.3" r="1.2" fill="#fff"/></svg>
<div class="ab" style="left:1209px;top:1240.4px;width:2px;height:14px;background:#e6e6e6"></div>
<svg class="ab" style="left:1228px;top:1239.8999999999999px" width="18" height="16" viewBox="0 0 18 16"><path fill="#c07d24" d="M1.7 0.9Q2.1 0 3.1 0H14.9Q15.9 0 16.3 0.9L17.7 4.6Q18 5.3 18 6V15Q18 16 17 16H16.4Q15.5 16 15.5 15V13.9H2.5V15Q2.5 16 1.6 16H1Q0 16 0 15V6Q0 5.3 0.3 4.6Z"/><rect x="3.2" y="2.2" width="11.6" height="2.9" fill="#fff"/><circle cx="4.5" cy="9.3" r="1.2" fill="#fff"/><circle cx="13.6" cy="9.3" r="1.2" fill="#fff"/></svg>
<div class="ab t r" style="left:1343px;top:1237.3999999999999px;font-size:18px;color:#a4adb8;font-weight:400;letter-spacing:-1.465px;">사용안함</div>
<div class="ab" style="left:1536px;top:1246px;width:6px;height:2px;background:#b3b7bd"></div>
<div class="ab t r" style="left:1739.5px;top:1236.8999999999999px;font-size:19px;color:#2b313b;font-weight:400;letter-spacing:0.656px;">25.04.08</div>
<div class="cb" style="left:439px;top:1325.1px"></div>
<div class="ab" style="left:510px;top:1326.6px;width:12px;height:12px;border-radius:50%;background:#2f7dcf"></div>
<div class="ab t r" style="left:533px;top:1321.6px;font-size:18px;color:#2f7dcf;font-weight:400;letter-spacing:-1.1px;">사용가능</div>
<div class="ab t r" style="left:647.5px;top:1313.1px;font-size:17.5px;color:#2b313b;font-weight:400;letter-spacing:-1.05px;">회사전화기</div>
<div class="ab t r" style="left:648.5px;top:1340.1999999999998px;font-size:15px;color:#6e7886;font-weight:400;letter-spacing:0px;word-spacing:1.8px;">CX팀 / 사원</div>
<div class="ab t r" style="left:936px;top:1324.1px;font-size:19px;color:#2b313b;font-weight:400;letter-spacing:0.833px;">test</div>
<svg class="ab" style="left:1173.5px;top:1327.1px" width="18" height="16" viewBox="0 0 18 16"><path fill="#2f7dcf" d="M1.7 0.9Q2.1 0 3.1 0H14.9Q15.9 0 16.3 0.9L17.7 4.6Q18 5.3 18 6V15Q18 16 17 16H16.4Q15.5 16 15.5 15V13.9H2.5V15Q2.5 16 1.6 16H1Q0 16 0 15V6Q0 5.3 0.3 4.6Z"/><rect x="3.2" y="2.2" width="11.6" height="2.9" fill="#fff"/><circle cx="4.5" cy="9.3" r="1.2" fill="#fff"/><circle cx="13.6" cy="9.3" r="1.2" fill="#fff"/></svg>
<div class="ab" style="left:1209px;top:1327.6px;width:2px;height:14px;background:#e6e6e6"></div>
<svg class="ab" style="left:1228px;top:1327.1px" width="18" height="16" viewBox="0 0 18 16"><path fill="#c07d24" d="M1.7 0.9Q2.1 0 3.1 0H14.9Q15.9 0 16.3 0.9L17.7 4.6Q18 5.3 18 6V15Q18 16 17 16H16.4Q15.5 16 15.5 15V13.9H2.5V15Q2.5 16 1.6 16H1Q0 16 0 15V6Q0 5.3 0.3 4.6Z"/><rect x="3.2" y="2.2" width="11.6" height="2.9" fill="#fff"/><circle cx="4.5" cy="9.3" r="1.2" fill="#fff"/><circle cx="13.6" cy="9.3" r="1.2" fill="#fff"/></svg>
<svg class="ab" style="left:1345px;top:1324.1px" width="19" height="19" viewBox="0 0 20 20"><circle cx="10" cy="10" r="10" fill="#2f7dcf"/><path d="M6.5 6.8L13.5 13.2L10 16.2V3.8L13.5 6.8L6.5 13.2" fill="none" stroke="#fff" stroke-width="1.5" stroke-linejoin="round"/></svg>
<div class="ab t r" style="left:1372px;top:1324.6px;font-size:18px;color:#2b313b;font-weight:400;letter-spacing:-1.481px;word-spacing:0px;">블루투스</div>
<div class="ab" style="left:1536px;top:1334px;width:6px;height:2px;background:#b3b7bd"></div>
<div class="ab t r" style="left:1739.5px;top:1324.1px;font-size:19px;color:#2b313b;font-weight:400;letter-spacing:0.656px;">25.04.02</div>
<div class="ab" style="left:399px;top:1374px;width:1579px;height:1px;background:#e3e6ea"></div>
<div class="ab" style="left:399px;top:1375px;width:1579px;height:66px;background:#fff;border-radius:0 0 10px 10px"></div>
<div class="ab" style="left:1971px;top:192px;width:6px;height:461px;border-radius:3px;background:#c3c4c5"></div>
<div class="ab" style="left:1662px;top:1391px;width:33px;height:33px;border:1px solid #e3e6ea;border-radius:6px"></div>
<svg class="ab" style="left:1674px;top:1401px" width="10" height="14" viewBox="0 0 10 14"><path d="M6.5 3L3 7L6.5 11" fill="none" stroke="#2b313b" stroke-width="1.2" stroke-linecap="round"/></svg>
<div class="ab" style="left:1702px;top:1389px;width:34px;height:34px;border-radius:6px;background:#4a93e0;color:#fff;font-weight:700;font-size:19px;text-align:center;line-height:36px">1</div>
<div class="ab" style="left:1741px;top:1391px;width:34px;height:33px;border:1px solid #e3e6ea;border-radius:6px"></div>
<svg class="ab" style="left:1753px;top:1401px" width="10" height="14" viewBox="0 0 10 14"><path d="M3.5 3L7 7L3.5 11" fill="none" stroke="#2b313b" stroke-width="1.2" stroke-linecap="round"/></svg>
<div class="ab" style="left:1801px;top:1384px;width:147px;height:48px;border:1px solid #e3e6ea;border-radius:8px"></div>
<div class="ab t r" style="left:1816px;top:1400.5px;font-size:18px;color:#2b313b;font-weight:400;letter-spacing:0px;">50개씩 보기</div>
<svg class="ab" style="left:1921px;top:1403px" width="14" height="10" viewBox="0 0 14 10"><path d="M2.5 2.5L7 7L11.5 2.5" fill="none" stroke="#2b313b" stroke-width="1.8" stroke-linecap="round" stroke-linejoin="round"/></svg>
<svg class="ab" style="left:1062px;top:749px" width="38" height="40" viewBox="0 0 38 40"><path d="M10.9 1.2C9 1.2 8.2 3 8.4 5L9.9 19.4C8.8 17.5 6.6 14.8 4.2 14.8C2 14.8 0.8 16.5 1.6 18.5C3.5 22.5 7.5 27.5 10.5 31.5L13.8 34.2V37.2H22L23.8 34.5L26 37.2H30.3V32.5C32.5 30 35.5 26 35.8 21V15.5C35.8 13.5 34.8 12.5 33 12.5C31.2 12.5 30 14 30 16.2V13C30 11 28.8 9.8 27 9.8C25.2 9.8 24 11 23.4 13.5C23 11 21.8 9.8 20 9.8C18 9.8 16.8 11.5 16.5 13.5L14 4.5C13.5 2.5 12.5 1.2 10.9 1.2Z" fill="#fff" stroke="#000" stroke-width="2" stroke-linejoin="round"/><path d="M18.4 22V29.5M23 22V29.5M27.6 22V29.5" stroke="#000" stroke-width="1.6"/></svg>
</body></html>
